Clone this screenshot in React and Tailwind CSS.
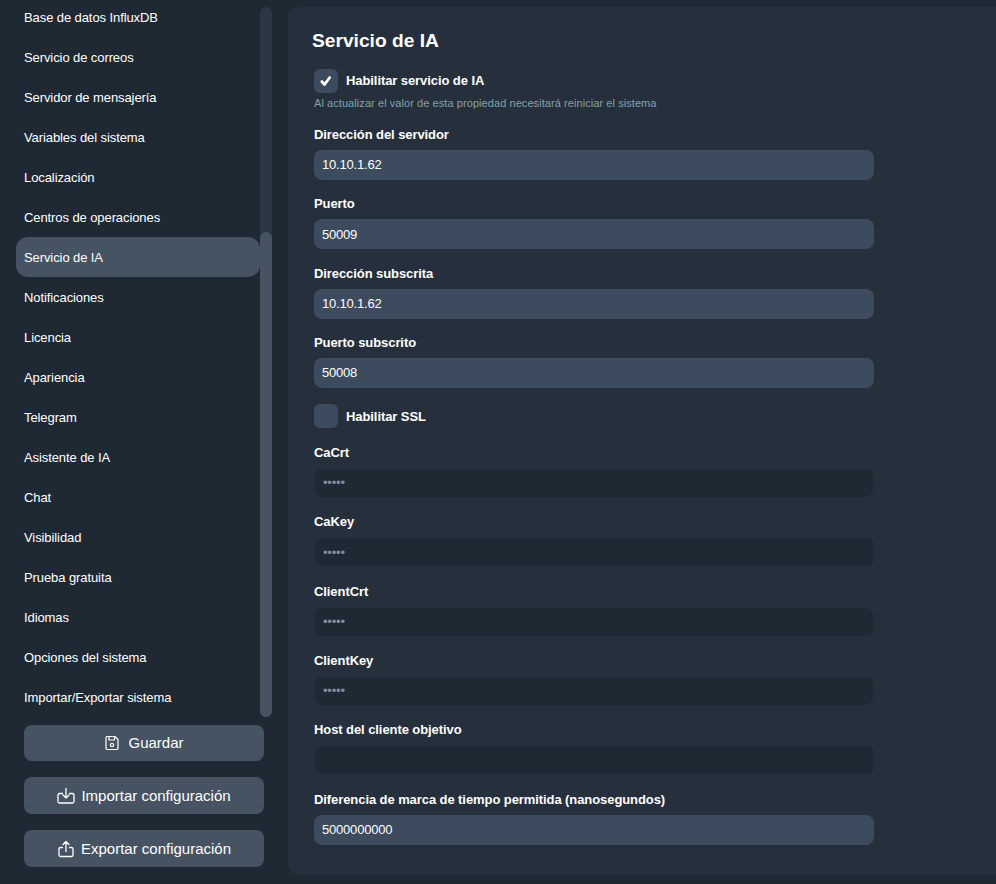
import React from 'react';

const menuItems = [
  'Base de datos InfluxDB',
  'Servicio de correos',
  'Servidor de mensajería',
  'Variables del sistema',
  'Localización',
  'Centros de operaciones',
  'Servicio de IA',
  'Notificaciones',
  'Licencia',
  'Apariencia',
  'Telegram',
  'Asistente de IA',
  'Chat',
  'Visibilidad',
  'Prueba gratuita',
  'Idiomas',
  'Opciones del sistema',
  'Importar/Exportar sistema',
];

const CheckIcon = () => (
  <svg width="14" height="14" viewBox="0 0 14 14" fill="none" stroke="currentColor" strokeWidth="2.800" strokeLinecap="round" strokeLinejoin="round">
    <path d="M2.800 7.500l2.700 3 5.200-7" />
  </svg>
);

const SaveIcon = () => (
  <svg width="16" height="16" viewBox="0 0 16 16" fill="none" stroke="currentColor" strokeWidth="1.2" strokeLinejoin="round">
    <path d="M3 1.500h8l3 3v8.500a1.500 1.500 0 0 1-1.500 1.500h-9.500a1.500 1.500 0 0 1-1-1.500v-10a1.500 1.500 0 0 1 1-1.500z" />
    <path d="M5 1.500v3.500h5.500v-3.500" />
    <rect x="6.500" y="8.500" width="3" height="3" rx="1" />
  </svg>
);

const ImportIcon = () => (
  <svg width="18" height="18" viewBox="0 0 18 18" fill="none" stroke="currentColor" strokeWidth="1.3" strokeLinecap="round" strokeLinejoin="round">
    <path d="M5.500 6.500h-3a1.500 1.500 0 0 0-1.500 1.500v6.500a1.500 1.500 0 0 0 1.500 1.500h13a1.500 1.500 0 0 0 1.500-1.500v-6.500a1.500 1.500 0 0 0-1.500-1.500h-3" />
    <path d="M9 1.500v9.500M6 8l3 3 3-3" />
  </svg>
);

const ExportIcon = () => (
  <svg width="18" height="18" viewBox="0 0 18 18" fill="none" stroke="currentColor" strokeWidth="1.3" strokeLinecap="round" strokeLinejoin="round">
    <path d="M5.500 7.500h-2a1.500 1.500 0 0 0-1.500 1.500v6a1.500 1.500 0 0 0 1.500 1.500h11a1.500 1.500 0 0 0 1.500-1.500v-6a1.500 1.500 0 0 0-1.500-1.500h-2" />
    <path d="M9 11.500v-10M6 4.500l3-3 3 3" />
  </svg>
);

const SideButton = ({ icon, label, className }) => (
  <button className={`flex w-[240px] items-center justify-center rounded-lg bg-[#465363] text-[15px] text-white ${className}`}>
    {icon}
    {label}
  </button>
);

const Field = ({ label, value, dark }) => (
  <div className="flex h-[69.33px] flex-col">
    <label className="mb-[5px] text-[13px] font-bold leading-[20px] tracking-[-0.08px] text-white">{label}</label>
    <div
      className={`flex h-[30px] w-[560px] items-center rounded-lg px-2 text-[13px] tracking-[-0.2px] ${
        dark ? 'border border-[#26303c] bg-[#1f2933] text-[#7f8c99]' : 'bg-[#3d4b5f] text-white'
      }`}
    >
      {value}
    </div>
  </div>
);

export default function App() {
  return (
    <div
      className="flex h-[884px] w-[996px] overflow-hidden bg-[#1f2933] text-white"
      style={{ fontFamily: '"Liberation Sans", sans-serif' }}
    >
      <aside className="flex w-[288px] shrink-0 flex-col pt-[7px]">
        <div className="flex h-[710px] pl-4">
          <nav className="w-[244px] overflow-hidden">
            <ul className="-mt-[10px]">
              {menuItems.map((item) => (
                <li
                  key={item}
                  className={`flex h-10 items-center rounded-xl px-2 pt-px text-[13px] tracking-[-0.09px] text-white ${
                    item === 'Servicio de IA' ? 'bg-[#465363]' : ''
                  }`}
                >
                  {item}
                </li>
              ))}
            </ul>
          </nav>
          <div className="flex w-3 flex-col justify-end rounded-full bg-[#2b3743]">
            <div className="h-[485px] rounded-full bg-[#465363]" />
          </div>
        </div>
        <div className="mt-2 flex flex-col gap-4 pl-6">
          <SideButton icon={<SaveIcon />} label="Guardar" className="h-9 gap-2" />
          <SideButton icon={<ImportIcon />} label="Importar configuración" className="h-[37px] gap-1.5 pt-px" />
          <SideButton icon={<ExportIcon />} label="Exportar configuración" className="h-[37px] gap-1.5 pt-px" />
        </div>
      </aside>

      <main className="mb-[9px] mt-[7px] flex-1 rounded-l-xl bg-[#26303c] pl-6 pt-[20px]">
        <h1 className="text-[19.2px] font-bold leading-7 text-white">Servicio de IA</h1>
        <div className="pl-[2px]">
          <div className="mt-[14px] flex items-center gap-2">
            <span className="flex h-6 w-6 items-center justify-center rounded-md bg-[#3d4b5f]">
              <CheckIcon />
            </span>
            <span className="text-[13px] font-bold tracking-[-0.08px]">Habilitar servicio de IA</span>
          </div>
          <p className="mb-[14px] mt-[2px] text-[11px] leading-[16px] tracking-[0.07px] text-[#83a1ab]">
            Al actualizar el valor de esta propiedad necesitará reiniciar el sistema
          </p>
          <Field label="Dirección del servidor" value="10.10.1.62" />
          <Field label="Puerto" value="50009" />
          <Field label="Dirección subscrita" value="10.10.1.62" />
          <Field label="Puerto subscrito" value="50008" />
          <div className="mb-[14.7px] mt-[2px] flex items-center gap-2">
            <span className="h-6 w-6 rounded-md bg-[#3d4b5f]" />
            <span className="text-[13px] font-bold tracking-[-0.08px]">Habilitar SSL</span>
          </div>
          <Field label="CaCrt" value="•••••" dark />
          <Field label="CaKey" value="•••••" dark />
          <Field label="ClientCrt" value="•••••" dark />
          <Field label="ClientKey" value="•••••" dark />
          <Field label="Host del cliente objetivo" value="" dark />
          <Field label="Diferencia de marca de tiempo permitida (nanosegundos)" value="5000000000" />
        </div>
      </main>
    </div>
  );
}
